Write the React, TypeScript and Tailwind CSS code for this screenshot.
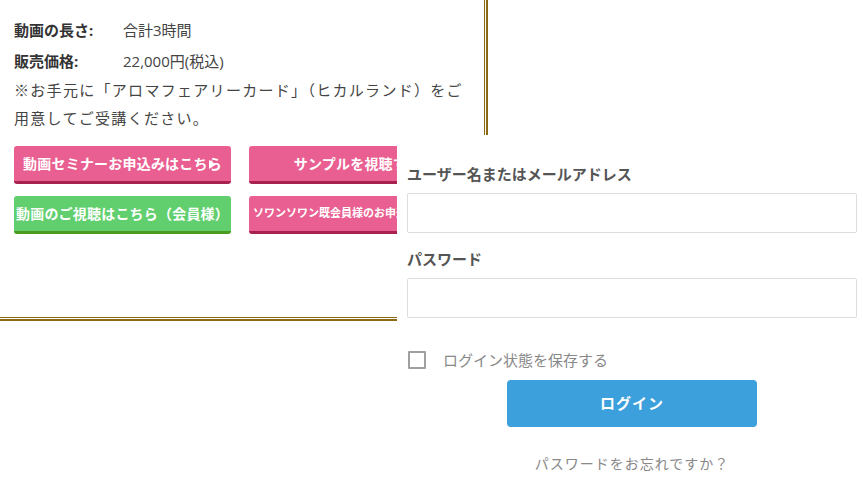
const font = '[font-family:"Open_Sans","Noto_Sans_CJK_JP",sans-serif]';

function SeminarButton({ label, color, small, arrow }: { label: string; color: 'pink' | 'green'; small?: boolean; arrow?: boolean }) {
  const tone =
    color === 'pink'
      ? 'bg-[#e95f91] border-[#a8224f]'
      : 'bg-[#62cf6f] border-[#4a9c1e]';
  return (
    <div
      className={`relative h-[38px] w-[217px] rounded-[3px] border-b-[3px] ${tone} flex items-center justify-center text-white font-bold whitespace-nowrap ${
        small ? 'text-[11px]' : 'text-[14px] tracking-[0.2px]'
      }`}
    >
      {label}
      {arrow && (
        <svg className="absolute right-[15px] top-[14px]" width="7" height="9" viewBox="0 0 7 9">
          <polygon points="0,0 7,4.5 0,9" fill="#fff" />
        </svg>
      )}
    </div>
  );
}

export default function App() {
  return (
    <div className={`relative w-[863px] h-[482px] overflow-hidden bg-white ${font}`}>
      {/* product panel with double rule */}
      <div className="w-[488px] h-[321px] border-r-2 border-b-2 border-[#8b6a14] pr-px pb-px flex">
        <div className="flex-1 border-r border-b border-[#8b6a14] pl-[14px] pt-[19px] text-[#444]">
          <div className="flex text-[15px] leading-[22px]">
            <span className="w-[109px] font-bold text-[#333]">動画の長さ:</span>
            <span>合計3時間</span>
          </div>
          <div className="flex text-[15px] leading-[22px] mt-[9px]">
            <span className="w-[109px] font-bold text-[#333]">販売価格:</span>
            <span>22,000円(税込)</span>
          </div>
          <p className="mt-[4px] text-[15px] leading-[28px] tracking-[1.3px] w-[462px]">
            ※お手元に「アロマフェアリーカード」（ヒカルランド）をご用意してご受講ください。
          </p>
          <div className="mt-[14px] grid grid-cols-[217px_217px] gap-x-[18px] gap-y-[12px]">
            <SeminarButton label="動画セミナーお申込みはこちら" color="pink" arrow />
            <SeminarButton label="サンプルを視聴する" color="pink" />
            <SeminarButton label="動画のご視聴はこちら（会員様）" color="green" />
            <SeminarButton label="ソワンソワン既会員様のお申込みはこちら" color="pink" small />
          </div>
        </div>
      </div>

      {/* login form overlay */}
      <div className="absolute left-[397px] top-[135px] right-0 bottom-0 bg-white pl-[10px] pr-[6px] pt-[28px]">
        <label className="block text-[15px] leading-[22px] font-bold text-[#555]">ユーザー名またはメールアドレス</label>
        <input type="text" className="mt-[8px] block w-full h-[40px] border border-[#ddd] rounded-[2px] outline-none" />
        <label className="block mt-[15px] text-[15px] leading-[22px] font-bold text-[#555]">パスワード</label>
        <input type="password" className="mt-[8px] block w-full h-[40px] border border-[#ddd] rounded-[2px] outline-none" />
        <div className="mt-[33px] flex items-center h-[18px]">
          <span className="ml-px w-[18px] h-[18px] border-2 border-[#a0a0a0] rounded-[1px]" />
          <span className="ml-[17px] text-[15px] text-[#888]">ログイン状態を保存する</span>
        </div>
        <div className="mt-[11px] flex justify-center">
          <button className="w-[250px] h-[47px] rounded-[4px] bg-[#3ca0dc] text-white text-[15px] font-bold tracking-[1px]">
            ログイン
          </button>
        </div>
        <p className="mt-[26px] text-center text-[14px] tracking-[1px] text-[#888]">パスワードをお忘れですか？</p>
      </div>
    </div>
  );
}
